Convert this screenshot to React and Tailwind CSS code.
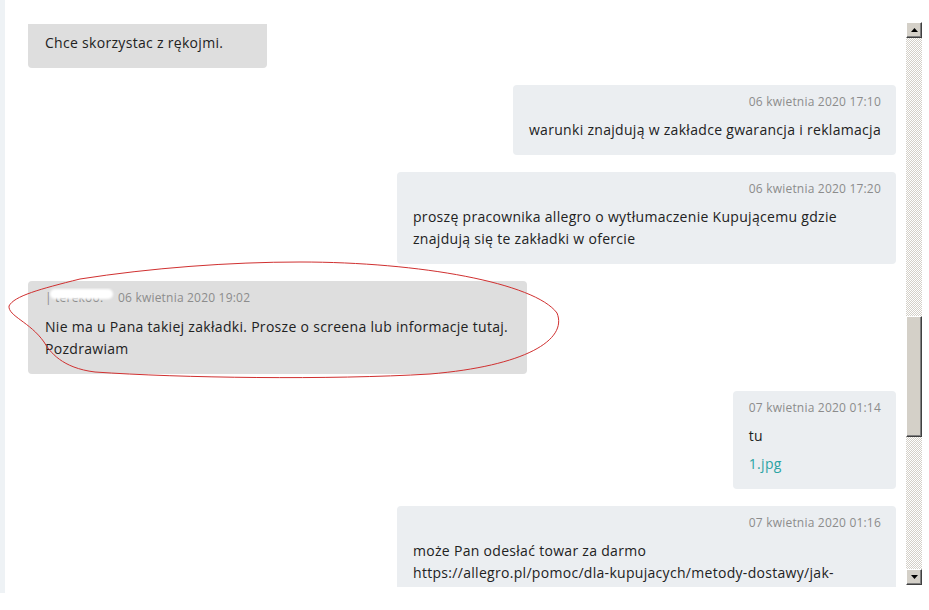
const font = { fontFamily: '"Open Sans", "Noto Sans", sans-serif' };

function Stamp({ children }) {
  return <div className="h-[20px] text-[12px] leading-[20px] tracking-[0.2px] text-[#8c8c8c]">{children}</div>;
}

function Mine({ time, className = '', children }) {
  return (
    <div className="flex justify-end">
      <div className={`rounded-[4px] bg-[#ebeef1] pl-[16px] pr-[15px] pt-[7px] pb-[14px] ${className}`}>
        <div className="text-right">
          <Stamp>{time}</Stamp>
        </div>
        <div className="mt-[7px] text-[14px] leading-[22px] tracking-[0.3px] text-[#222]">{children}</div>
      </div>
    </div>
  );
}

function ScrollBtn({ up }) {
  return (
    <div className="flex h-[16px] w-[16px] items-center justify-center border border-t-white border-l-white border-r-[#404040] border-b-[#404040] bg-[#d4d0c8] shadow-[inset_-1px_-1px_0_#808080]">
      <svg width="7" height="4" viewBox="0 0 7 4">
        {up ? <path d="M3.5 0 L7 4 L0 4 Z" fill="#000" /> : <path d="M0 0 L7 0 L3.5 4 Z" fill="#000" />}
      </svg>
    </div>
  );
}

export default function App() {
  return (
    <div className="relative flex h-[610px] w-[929px] overflow-hidden bg-white" style={font}>
      <div className="h-[593px] w-[5px] shrink-0 bg-[#eef2f5]" />

      <div className="mt-[24px] h-[563px] flex-1 overflow-hidden pl-[23px] pr-[10px]">
        <div className="mt-[-26px] flex flex-col gap-[17px]">
          <div className="flex">
            <div className="w-[239px] rounded-[4px] bg-[#dedede] pl-[17px] pr-[15px] pt-[7px] pb-[14px]">
              <Stamp>&nbsp;</Stamp>
              <div className="mt-[7px] text-[14px] leading-[22px] tracking-[0.3px] text-[#222]">Chce skorzystac z rękojmi.</div>
            </div>
          </div>

          <Mine time="06 kwietnia 2020 17:10">warunki znajdują w zakładce gwarancja i reklamacja</Mine>

          <Mine time="06 kwietnia 2020 17:20" className="w-[499px]">
            proszę pracownika allegro o wytłumaczenie Kupującemu gdzie
            <br />
            znajdują się te zakładki w ofercie
          </Mine>

          <div className="flex">
            <div className="w-[499px] rounded-[4px] bg-[#dedede] pl-[17px] pr-[15px] pt-[7px] pb-[14px]">
              <div className="flex h-[20px] items-center text-[12px] leading-[20px] tracking-[0.2px] text-[#8c8c8c]">
                <span className="relative w-[73px] overflow-hidden whitespace-nowrap">
                  | terekoo.
                  <span className="absolute left-[5px] top-[1px] h-[10px] w-[63px] rounded-[5px] bg-white blur-[1px]" />
                </span>
                <span>06 kwietnia 2020 19:02</span>
              </div>
              <div className="mt-[8px] text-[14px] leading-[22px] tracking-[0.3px] text-[#222]">
                Nie ma u Pana takiej zakładki. Prosze o screena lub informacje tutaj.
                <br />
                Pozdrawiam
              </div>
            </div>
          </div>

          <Mine time="07 kwietnia 2020 01:14">
            <div>tu</div>
            <div className="mt-[6px] text-[#2ba4a4]">1.jpg</div>
          </Mine>

          <Mine time="07 kwietnia 2020 01:16" className="w-[499px]">
            może Pan odesłać towar za darmo
            <br />
            https://allegro.pl/pomoc/dla-kupujacych/metody-dostawy/jak-
          </Mine>
        </div>
      </div>

      <div className="mt-[22px] flex h-[563px] w-[16px] shrink-0 flex-col bg-[repeating-conic-gradient(#d4d0c8_0_25%,#ffffff_0_50%)] bg-[length:2px_2px]">
        <ScrollBtn up />
        <div className="h-[278px]" />
        <div className="h-[121px] w-[16px] border border-t-white border-l-white border-r-[#404040] border-b-[#404040] bg-[#d4d0c8] shadow-[inset_-1px_-1px_0_#808080]" />
        <div className="flex-1" />
        <ScrollBtn />
      </div>
      <div className="w-[7px] shrink-0" />

      <svg className="pointer-events-none absolute left-0 top-0" width="929" height="610">
        <path
          d="M 300 262 C 420 262, 535 283, 557 313 C 568 340, 525 366, 430 374 C 330 380, 180 378, 95 372 C 62 368, 50 352, 44 342 C 30 322, 8 316, 9 306 C 14 296, 40 289, 80 279 C 150 268, 230 262, 300 262"
          fill="none"
          stroke="#d03030"
          strokeWidth="1"
        />
      </svg>
    </div>
  );
}
